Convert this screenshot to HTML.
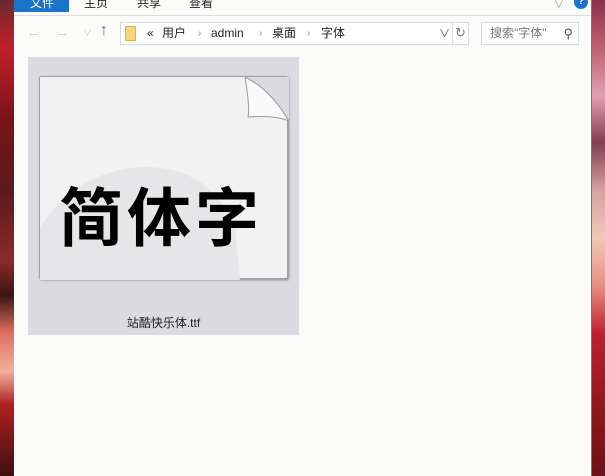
<!DOCTYPE html>
<html><head><meta charset="utf-8"><style>
*{margin:0;padding:0;box-sizing:border-box}
body{width:605px;height:476px;overflow:hidden;position:relative;background:#fbfbf9;font-family:"Liberation Sans","Noto Sans CJK SC",sans-serif;font-size:12px;color:#222}
.lbg{position:absolute;left:0;top:0;width:14px;height:476px;background:linear-gradient(180deg,#6a2a30 0%,#c0202a 10%,#7a1418 25%,#5a1a1c 40%,#8a2a2a 55%,#3a1414 62%,#e07060 70%,#f0b0a0 78%,#b02020 85%,#401010 100%)}
.rbg{position:absolute;left:591px;top:0;width:14px;height:476px;background:linear-gradient(180deg,#8a3048 0%,#c06070 10%,#e0a0b0 20%,#804050 30%,#d8a0a0 40%,#f0c8b8 50%,#e89080 60%,#c02030 70%,#901820 85%,#701018 100%);border-left:1px solid #777}
.win{position:absolute;left:14px;top:0;width:577px;height:476px;background:#fbfbf9}
.tab{position:absolute;top:0;height:12px;font-size:12px;line-height:6px;overflow:hidden}
.sep{position:absolute;left:0;top:15px;width:577px;height:1px;background:#dcdcdc}
.addr{position:absolute;left:106px;top:22px;width:349px;height:23px;border:1px solid #d9d9d9;background:#fff}
.addr span{position:absolute;top:2px;line-height:17px;white-space:nowrap}
.addr .c{color:#888;font-size:10px}
.search{position:absolute;left:467px;top:22px;width:98px;height:23px;border:1px solid #d9d9d9;background:#fff;color:#777;font-size:12px;line-height:21px;padding-left:8px}
.tile{position:absolute;left:14px;top:57px;width:271px;height:278px;background:#dadadf}
.doc{position:absolute;left:11px;top:19px;width:249px;height:203px;background:#f2f2f3;border:1px solid #a0a0a6;box-shadow:1px 1px 2px #888;border-radius:2px}
</style></head><body>
<div class="lbg"></div><div class="rbg"></div>
<div class="win">
 <div style="position:absolute;left:0;top:0;width:55px;height:12px;background:#1a73c8"></div>
 <div class="tab" style="left:16px;color:#fff">文件</div>
 <div class="tab" style="left:70px">主页</div>
 <div class="tab" style="left:123px">共享</div>
 <div class="tab" style="left:175px">查看</div>
 <div style="position:absolute;left:540px;top:-4px;color:#999;font-size:10px">∨</div>
 <div style="position:absolute;left:560px;top:-5px;width:14px;height:14px;border-radius:7px;background:#1a73c8;color:#fff;font-size:10px;font-weight:bold;text-align:center;line-height:14px">?</div>
 <div class="sep"></div>
 <div style="position:absolute;left:12px;top:24px;color:#ccc;font-size:15px">←</div>
 <div style="position:absolute;left:41px;top:24px;color:#ccc;font-size:15px">→</div>
 <div style="position:absolute;left:69px;top:26px;color:#ccc;font-size:9px">∨</div>
 <div style="position:absolute;left:86px;top:22px;color:#666;font-size:16px;font-weight:bold">↑</div>
 <div class="addr">
  <div style="position:absolute;left:4px;top:3px;width:11px;height:15px;background:#f8d77a;border:1px solid #d8b050;border-radius:1px"></div>
  <span style="left:26px">«</span>
  <span style="left:41px">用户</span>
  <span class="c" style="left:77px">›</span>
  <span style="left:90px">admin</span>
  <span class="c" style="left:138px">›</span>
  <span style="left:151px">桌面</span>
  <span class="c" style="left:186px">›</span>
  <span style="left:200px">字体</span>
  <div style="position:absolute;left:318px;top:2px;color:#555;font-size:11px">∨</div>
  <div style="position:absolute;left:331px;top:0;width:1px;height:21px;background:#ddd"></div>
  <div style="position:absolute;left:334px;top:2px;color:#777;font-size:13px">↻</div>
 </div>
 <div class="search">搜索"字体"<span style="position:absolute;right:5px;top:0;color:#555;font-size:13px">⚲</span></div>
 <div class="tile">
  <div class="doc">
   <svg width="249" height="203" style="position:absolute;left:0;top:0">
    <path d="M0 150 Q40 90 110 90 Q170 92 195 150 L200 203 L0 203Z" fill="#e6e6e9"/>
    <path d="M205 0 L249 44 L249 0Z" fill="#dadadf"/>
    <path d="M205 0 Q210 30 208 40 Q235 38 249 44 Q230 12 205 0Z" fill="#fafafa" stroke="#999" stroke-width="1"/>
   </svg>
   <div style="position:absolute;left:19px;top:102px;font-size:64px;font-weight:bold;color:#000;letter-spacing:4px;line-height:70px;font-family:'Noto Sans CJK SC',sans-serif">简体字</div>
  </div>
  <div style="position:absolute;left:0;top:257px;width:271px;text-align:center;font-size:12px;color:#222">站酷快乐体.ttf</div>
 </div>
</div>
</body></html>
